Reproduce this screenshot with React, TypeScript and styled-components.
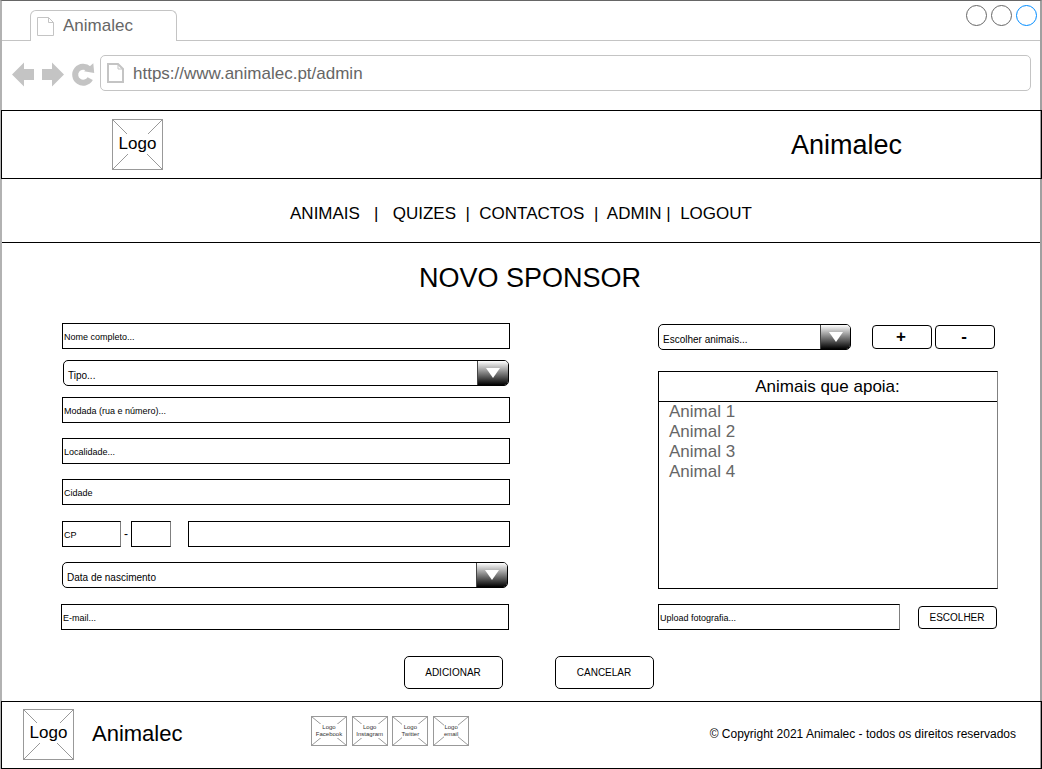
import React from "react";
import styled, { createGlobalStyle } from "styled-components";

const GlobalStyle = createGlobalStyle`
  *, *::before, *::after { box-sizing: border-box; }
  body {
    margin: 0;
    background: #fff;
    color: #000;
    font-family: "Liberation Sans", Arial, Helvetica, sans-serif;
  }
  button { font-family: inherit; color: inherit; padding: 0; background: #fff; }
`;

const Window = styled.div`
  display: flex;
  flex-direction: column;
  width: 1042px;
  height: 769px;
  border: solid;
  border-width: 1px 2px 0;
  border-color: #666 #a0a0a0 #000 #b2b2b2;
`;

/* Browser chrome */

const TabStrip = styled.div`
  display: flex;
  height: 40px;
`;

const StripEdge = styled.div<{ $grow?: boolean }>`
  display: flex;
  justify-content: flex-end;
  gap: 4px;
  ${(p) => (p.$grow ? "flex: 1;" : "width: 28px;")}
  padding: 4px 3px 0 0;
  border-bottom: 1px solid #c4c4c4;
`;

const Tab = styled.div`
  display: flex;
  align-items: flex-start;
  gap: 9px;
  width: 147px;
  margin-top: 9px;
  padding: 6px 0 0 6px;
  border: 1px solid #c4c4c4;
  border-bottom: 0;
  border-radius: 6px 6px 0 0;
  color: #666;
  font-size: 17px;
  line-height: 19px;
`;

const TabTitle = styled.span`
  margin-top: -1px;
`;

const WindowDot = styled.span<{ $color: string }>`
  width: 21px;
  height: 21px;
  border: 1px solid ${(p) => p.$color};
  border-radius: 50%;
`;

const Toolbar = styled.div`
  display: flex;
  height: 69px;
  padding: 14px 9px 0 10px;
`;

const NavIcons = styled.svg`
  width: 84px;
  height: 36px;
  margin-right: 4px;
  fill: #c4c4c4;
`;

const AddressBar = styled.div`
  display: flex;
  align-items: center;
  flex: 1;
  gap: 9px;
  height: 36px;
  padding-left: 6px;
  border: 1px solid #c4c4c4;
  border-radius: 5px;
  color: #666;
  font-size: 17px;
  line-height: 20px;
`;

const Address = styled.span`
  padding-top: 2px;
`;

/* Page */

const Header = styled.header`
  display: flex;
  align-items: center;
  justify-content: space-between;
  height: 69px;
  margin: 0 -2px 0 -1px;
  padding: 0 139px 0 110px;
  border: 1px solid #000;
`;

const Brand = styled.span<{ $size: number; $drop?: number }>`
  padding-top: ${(p) => p.$drop ?? 0}px;
  font-size: ${(p) => p.$size}px;
  line-height: ${(p) => p.$size + 4}px;
`;

const Nav = styled.nav`
  height: 64px;
  padding-top: 25px;
  border-bottom: 1px solid #000;
  text-align: center;
  white-space: pre;
  font-size: 17px;
  line-height: 20px;
`;

const Main = styled.main`
  flex: 1;
  padding: 20px 43px 0 59px;
`;

const Title = styled.h1`
  margin: 0 0 29px;
  padding-left: 2px;
  text-align: center;
  font-size: 27px;
  font-weight: 400;
  line-height: 31px;
`;

const Columns = styled.div`
  display: flex;
  justify-content: space-between;
`;

const LeftColumn = styled.div`
  width: 449px;
`;

const RightColumn = styled.div`
  width: 340px;
  margin-right: -1px;
  padding-top: 1px;
`;

const Row = styled.div<{ $top?: number; $left?: number }>`
  display: flex;
  margin: ${(p) => p.$top ?? 0}px 0 0 ${(p) => p.$left ?? 0}px;
`;

const Field = styled.div<{ $width?: number; $softEdge?: boolean }>`
  width: ${(p) => p.$width ?? 448}px;
  height: 26px;
  padding: 1px 0 0 1px;
  border: 1px solid #000;
  ${(p) => p.$softEdge && "border-right-color: #808080;"}
  font-size: 9px;
  line-height: 24px;
`;

const Dash = styled.span`
  width: 10px;
  text-align: center;
  font-size: 12px;
  line-height: 26px;
`;

const SelectBox = styled.div<{ $width: number }>`
  display: flex;
  justify-content: space-between;
  width: ${(p) => p.$width}px;
  height: 26px;
  padding-left: 4px;
  border: 1px solid #000;
  border-radius: 5px;
  overflow: hidden;
  font-size: 10px;
  line-height: 30px;
`;

const SelectArrow = styled.span<{ $width: number }>`
  display: flex;
  justify-content: center;
  width: ${(p) => p.$width}px;
  padding-top: 7px;
  border-left: 1px solid #444;
  background: linear-gradient(#fff, #000);
`;

const Button = styled.button<{ $w: number; $h: number; $radius?: number }>`
  width: ${(p) => p.$w}px;
  height: ${(p) => p.$h}px;
  padding-right: 1px;
  border: 1px solid #000;
  border-radius: ${(p) => p.$radius ?? 4}px;
  font-size: 10px;
  line-height: 1;
`;

const SignButton = styled(Button)`
  padding: 0 2px 1px 0;
  font-size: 17px;
  font-weight: 700;
`;

const AnimalBox = styled.section`
  height: 218px;
  margin-top: 21px;
  border: 1px solid #000;
  border-right-color: #808080;
  font-size: 17px;
  line-height: 20px;
`;

const AnimalHeading = styled.h2`
  height: 30px;
  margin: 0;
  padding: 5px 1px 0 0;
  border-bottom: 1px solid #000;
  text-align: center;
  font-size: 17px;
  font-weight: 400;
`;

const AnimalList = styled.ul`
  margin: 0;
  padding: 0 0 0 10px;
  list-style: none;
  color: #666;
`;

const Actions = styled.div`
  display: flex;
  gap: 52px;
  margin: 26px 0 0 343px;
`;

const Footer = styled.footer`
  display: flex;
  align-items: center;
  height: 68px;
  margin: 0 -2px 0 -1px;
  padding: 0 25px 2px 21px;
  border: 1px solid #000;
`;

const FooterBrand = styled.div`
  width: 237px;
  padding-left: 18px;
`;

const Socials = styled.div`
  display: flex;
  gap: 4.7px;
  margin-top: -7px;
`;

const Copyright = styled.small`
  margin-left: auto;
  font-size: 12px;
  line-height: 14px;
`;

const LogoFrame = styled.div<{ $w: number; $h: number }>`
  position: relative;
  display: flex;
  align-items: center;
  justify-content: center;
  width: ${(p) => p.$w}px;
  height: ${(p) => p.$h}px;
`;

const Cross = styled.svg`
  position: absolute;
  inset: 0;
  width: 100%;
  height: 100%;
  fill: none;
  stroke: #999;
`;

const LogoLabel = styled.span<{ $small?: boolean }>`
  position: relative;
  margin-bottom: ${(p) => (p.$small ? 0 : 2)}px;
  background: #fff;
  text-align: center;
  white-space: pre;
  font-size: ${(p) => (p.$small ? 6 : 17)}px;
  line-height: ${(p) => (p.$small ? 7 : 20)}px;
  ${(p) => p.$small && "color: #333;"}
`;

function Logo({ w, h, label, small }: { w: number; h: number; label: string; small?: boolean }) {
  return (
    <LogoFrame $w={w} $h={h}>
      <Cross viewBox={`0 0 ${w} ${h}`}>
        <rect x=".5" y=".5" width={w - 1} height={h - 1} />
        <path d={`M.5 .5L${w - 0.5} ${h - 0.5}M${w - 0.5} .5L.5 ${h - 0.5}`} />
      </Cross>
      <LogoLabel $small={small}>{label}</LogoLabel>
    </LogoFrame>
  );
}

function PageIcon({ w, h, fold, stroke }: { w: number; h: number; fold: number; stroke: number }) {
  const s = stroke / 2;
  return (
    <svg width={w} height={h} fill="none" stroke="#c4c4c4" strokeWidth={stroke}>
      <path d={`M${s} ${s}H${w - fold - s}L${w - s} ${fold + s}V${h - s}H${s}Z`} />
      <path d={`M${w - fold - s} ${s}V${fold + s}H${w - s}`} strokeWidth="1" />
    </svg>
  );
}

function Select({ width, label, arrow = 31 }: { width: number; label: string; arrow?: number }) {
  return (
    <SelectBox $width={width}>
      {label}
      <SelectArrow $width={arrow}>
        <svg width="14" height="10">
          <path d="M0 0H14L7 10Z" fill="#fff" />
        </svg>
      </SelectArrow>
    </SelectBox>
  );
}

const animals = ["Animal 1", "Animal 2", "Animal 3", "Animal 4"];
const socials = ["Facebook", "Instagram", "Twitter", "email"];

export default function App() {
  return (
    <Window>
      <GlobalStyle />
      <TabStrip>
        <StripEdge />
        <Tab>
          <PageIcon w={17} h={19} fold={5} stroke={1} />
          <TabTitle>Animalec</TabTitle>
        </Tab>
        <StripEdge $grow>
          <WindowDot $color="#666" />
          <WindowDot $color="#666" />
          <WindowDot $color="#008cff" />
        </StripEdge>
      </TabStrip>
      <Toolbar>
        <NavIcons viewBox="12 55 84 36">
          <path d="M12 74.5L24 62.5V69H34V80H24V86.5Z" />
          <path d="M64 74.5L52 62.5V69H42V80H52V86.5Z" />
          <path d="M90.2 78.6A8 8 0 1 1 88.8 69" fill="none" stroke="#c4c4c4" strokeWidth="6" />
          <path d="M93.3 63.3L94.2 73L84 71.2Z" />
        </NavIcons>
        <AddressBar>
          <PageIcon w={17} h={20} fold={5} stroke={2} />
          <Address>https://www.animalec.pt/admin</Address>
        </AddressBar>
      </Toolbar>

      <Header>
        <Logo w={51} h={51} label="Logo" />
        <Brand $size={27} $drop={2}>Animalec</Brand>
      </Header>
      <Nav>{"ANIMAIS   |   QUIZES  |  CONTACTOS  |  ADMIN |  LOGOUT"}</Nav>

      <Main>
        <Title>NOVO SPONSOR</Title>
        <Columns>
          <LeftColumn>
            <Row $left={1}><Field>Nome completo...</Field></Row>
            <Row $top={11} $left={2}><Select width={446} label="Tipo..." /></Row>
            <Row $top={11} $left={1}><Field>Modada (rua e número)...</Field></Row>
            <Row $top={15} $left={1}><Field>Localidade...</Field></Row>
            <Row $top={15} $left={1}><Field>Cidade</Field></Row>
            <Row $top={16} $left={1}>
              <Field $width={59} $softEdge>CP</Field>
              <Dash>-</Dash>
              <Field $width={40} $softEdge />
              <Row $left={17}><Field $width={322} /></Row>
            </Row>
            <Row $top={15} $left={1}><Select width={446} label="Data de nascimento" /></Row>
            <Row $top={16}><Field>E-mail...</Field></Row>
          </LeftColumn>
          <RightColumn>
            <Row>
              <Select width={193} arrow={30} label="Escolher animais..." />
              <Row $top={1} $left={21}><SignButton $w={60} $h={24}>+</SignButton></Row>
              <Row $top={1} $left={3}><SignButton $w={60} $h={24}>-</SignButton></Row>
            </Row>
            <AnimalBox>
              <AnimalHeading>Animais que apoia:</AnimalHeading>
              <AnimalList>
                {animals.map((name) => <li key={name}>{name}</li>)}
              </AnimalList>
            </AnimalBox>
            <Row $top={15}>
              <Field $width={242} $softEdge>Upload fotografia...</Field>
              <Row $top={2} $left={18}><Button $w={79} $h={23}>ESCOLHER</Button></Row>
            </Row>
          </RightColumn>
        </Columns>
        <Actions>
          <Button $w={99} $h={33} $radius={5}>ADICIONAR</Button>
          <Button $w={99} $h={33} $radius={5}>CANCELAR</Button>
        </Actions>
      </Main>

      <Footer>
        <Logo w={51} h={51} label="Logo" />
        <FooterBrand><Brand $size={22}>Animalec</Brand></FooterBrand>
        <Socials>
          {socials.map((name) => (
            <Logo key={name} w={36} h={30} small label={`Logo\n${name}`} />
          ))}
        </Socials>
        <Copyright>© Copyright 2021 Animalec - todos os direitos reservados</Copyright>
      </Footer>
    </Window>
  );
}
